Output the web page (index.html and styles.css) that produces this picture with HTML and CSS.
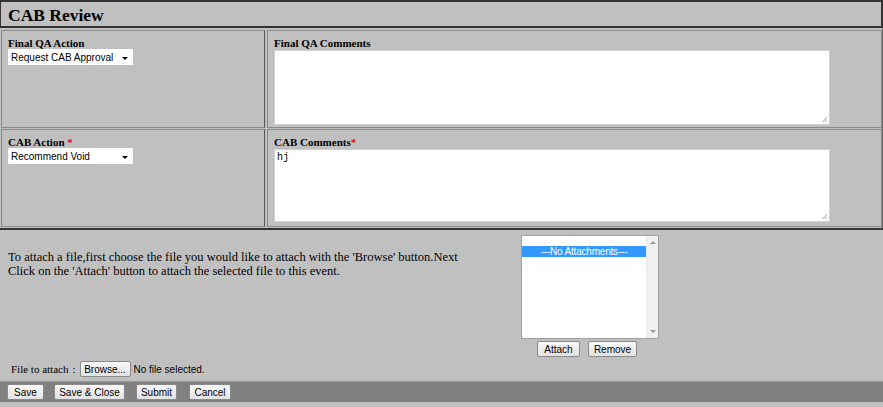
FILE: index.html
```html
<!DOCTYPE html>
<html>
<head>
<meta charset="utf-8">
<link rel="stylesheet" href="styles.css">
</head>
<body>
<div class="page">
  <div class="header">CAB Review</div>
  <div class="grid">
    <div class="cell left">
      <div class="label">Final QA Action</div>
      <div class="select"><span>Request CAB Approval</span><span class="arrow"></span></div>
    </div>
    <div class="cell right">
      <div class="label">Final QA Comments</div>
      <div class="textarea"><span class="grip"></span></div>
    </div>
    <div class="cell left">
      <div class="label">CAB Action <span class="req">*</span></div>
      <div class="select"><span>Recommend Void</span><span class="arrow"></span></div>
    </div>
    <div class="cell right">
      <div class="label">CAB Comments<span class="req">*</span></div>
      <div class="textarea short"><span class="typed">hj</span><span class="grip"></span></div>
    </div>
  </div>
  <div class="attach">
    <div class="attach-top">
      <p class="instr">To attach a file,first choose the file you would like to attach with the 'Browse' button.Next<br>Click on the 'Attach' button to attach the selected file to this event.</p>
      <div class="listwrap">
        <div class="listbox">
          <div class="options">
            <div class="opt sel">---No Attachments---</div>
          </div>
          <div class="scroll"><span class="up"></span><span class="down"></span></div>
        </div>
        <div class="listbtns">
          <span class="btn b-attach">Attach</span>
          <span class="btn b-remove">Remove</span>
        </div>
      </div>
    </div>
    <div class="fileline">
      <span class="ftl">File to attach</span>
      <span class="colon">:</span>
      <span class="btn browse">Browse...</span>
      <span class="nofile">No file selected.</span>
    </div>
  </div>
  <div class="footer">
    <span class="btn b-save">Save</span>
    <span class="btn b-saveclose">Save &amp; Close</span>
    <span class="btn b-submit">Submit</span>
    <span class="btn b-cancel">Cancel</span>
  </div>
</div>
</body>
</html>
```
FILE: styles.css
```css
* { box-sizing: border-box; }
html, body { margin: 0; padding: 0; background: #c0c0c0; }
body { width: 883px; height: 407px; overflow: hidden; font-family: "Liberation Serif", serif; color: #000; }
.page { width: 883px; }
.header {
  height: 28px;
  border-top: 2px solid #333;
  border-left: 1px solid #333;
  border-right: 2px solid #333;
  border-bottom: 2px solid #333;
  font-weight: bold;
  font-size: 17.5px;
  line-height: 26px;
  padding-left: 7px;
}
.grid {
  display: grid;
  grid-template-columns: 264px 615px;
  grid-template-rows: 98px 98px;
  gap: 1px 2px;
  padding: 2px 2px 1px 1px;
  border-right: 1px solid #666;
}
.cell {
  border: 1px solid #8a8a8a;
  padding: 6px 6px 0 6px;
}
.cell.left { border-right-color: #555; }
.label { font-weight: bold; font-size: 11px; line-height: 13px; height: 12px; white-space: nowrap; }
.req { color: #e00; }
.select {
  margin-top: 0;
  background: #fff;
  width: 125px;
  height: 16px;
  font-family: "Liberation Sans", Arial, sans-serif;
  font-size: 10px;
  line-height: 15px;
  padding-left: 3px;
  display: flex;
  justify-content: space-between;
  align-items: center;
  white-space: nowrap;
}
.arrow {
  width: 0; height: 0;
  border-left: 3px solid transparent;
  border-right: 3px solid transparent;
  border-top: 3px solid #000;
  margin-right: 5px;
  margin-top: 2px;
}
.textarea {
  position: relative;
  margin-top: 1px;
  width: 556px;
  height: 75px;
  background: #fff;
  border: 1px solid #d0d0d4;
}
.textarea.short { height: 73px; }
.typed { font-family: "Liberation Mono", monospace; font-size: 10px; display: block; padding: 2px 2px; line-height: 12px; }
.grip {
  position: absolute; right: 2px; bottom: 2px; width: 6px; height: 6px;
  background:
    linear-gradient(135deg, transparent 55%, #c8c8c8 55%, #c8c8c8 68%, transparent 68%, transparent 80%, #c8c8c8 80%);
}
.attach { border-top: 2px solid #333; height: 153px; padding: 0 0 0 8px; }
.attach-top { display: flex; height: 127px; }
.instr { margin: 20px 0 0 0; font-size: 12.5px; line-height: 14px; width: 513px; white-space: nowrap; }
.listwrap { display: flex; flex-direction: column; align-items: flex-start; margin-top: 5px; }
.listbox {
  width: 138px; height: 104px; background: #fff; border: 1px solid #a0a0a0; display: flex;
}
.options { flex: 1; padding-top: 10px; }
.opt { font-family: "Liberation Sans", Arial, sans-serif; font-size: 10px; line-height: 11px; height: 11px; text-align: center; letter-spacing: -0.2px; }
.opt.sel { background: #3399ff; color: #fff; }
.scroll { width: 12px; background: #f0f0f0; border-left: 1px solid #e8e8e8; position: relative; }
.up, .down { position: absolute; left: 3px; width: 0; height: 0; border-left: 3px solid transparent; border-right: 3px solid transparent; }
.up { top: 5px; border-bottom: 3px solid #999; }
.down { bottom: 5px; border-top: 3px solid #999; }
.listbtns { display: flex; gap: 8px; margin-top: 2px; margin-left: 16px; }
.btn {
  display: inline-block;
  font-family: "Liberation Sans", Arial, sans-serif;
  font-size: 10px;
  line-height: 13px;
  height: 16px;
  padding: 1px 0;
  text-align: center;
  background: linear-gradient(#f8f8f8, #e2e2e2);
  border: 1px solid #8a8a8a;
  border-radius: 2px;
  color: #000;
  white-space: nowrap;
}
.b-attach { width: 43px; }
.b-remove { width: 49px; }
.fileline { display: flex; align-items: center; padding-left: 3px; margin-top: 4px; height: 16px; }
.ftl { font-size: 11px; }
.colon { font-size: 11px; margin-left: 4px; margin-right: 4px; }
.browse { width: 51px; margin-right: 3px; }
.nofile { font-family: "Liberation Sans", Arial, sans-serif; font-size: 10px; }
.footer {
  background: #808080;
  height: 21px;
  border-top: 1px solid #9a9a9a;
  display: flex;
  align-items: center;
  padding-left: 7px;
}
.b-save { width: 37px; }
.b-saveclose { width: 71px; margin-left: 10px; }
.b-submit { width: 41px; margin-left: 11px; }
.b-cancel { width: 42px; margin-left: 12px; }
```
